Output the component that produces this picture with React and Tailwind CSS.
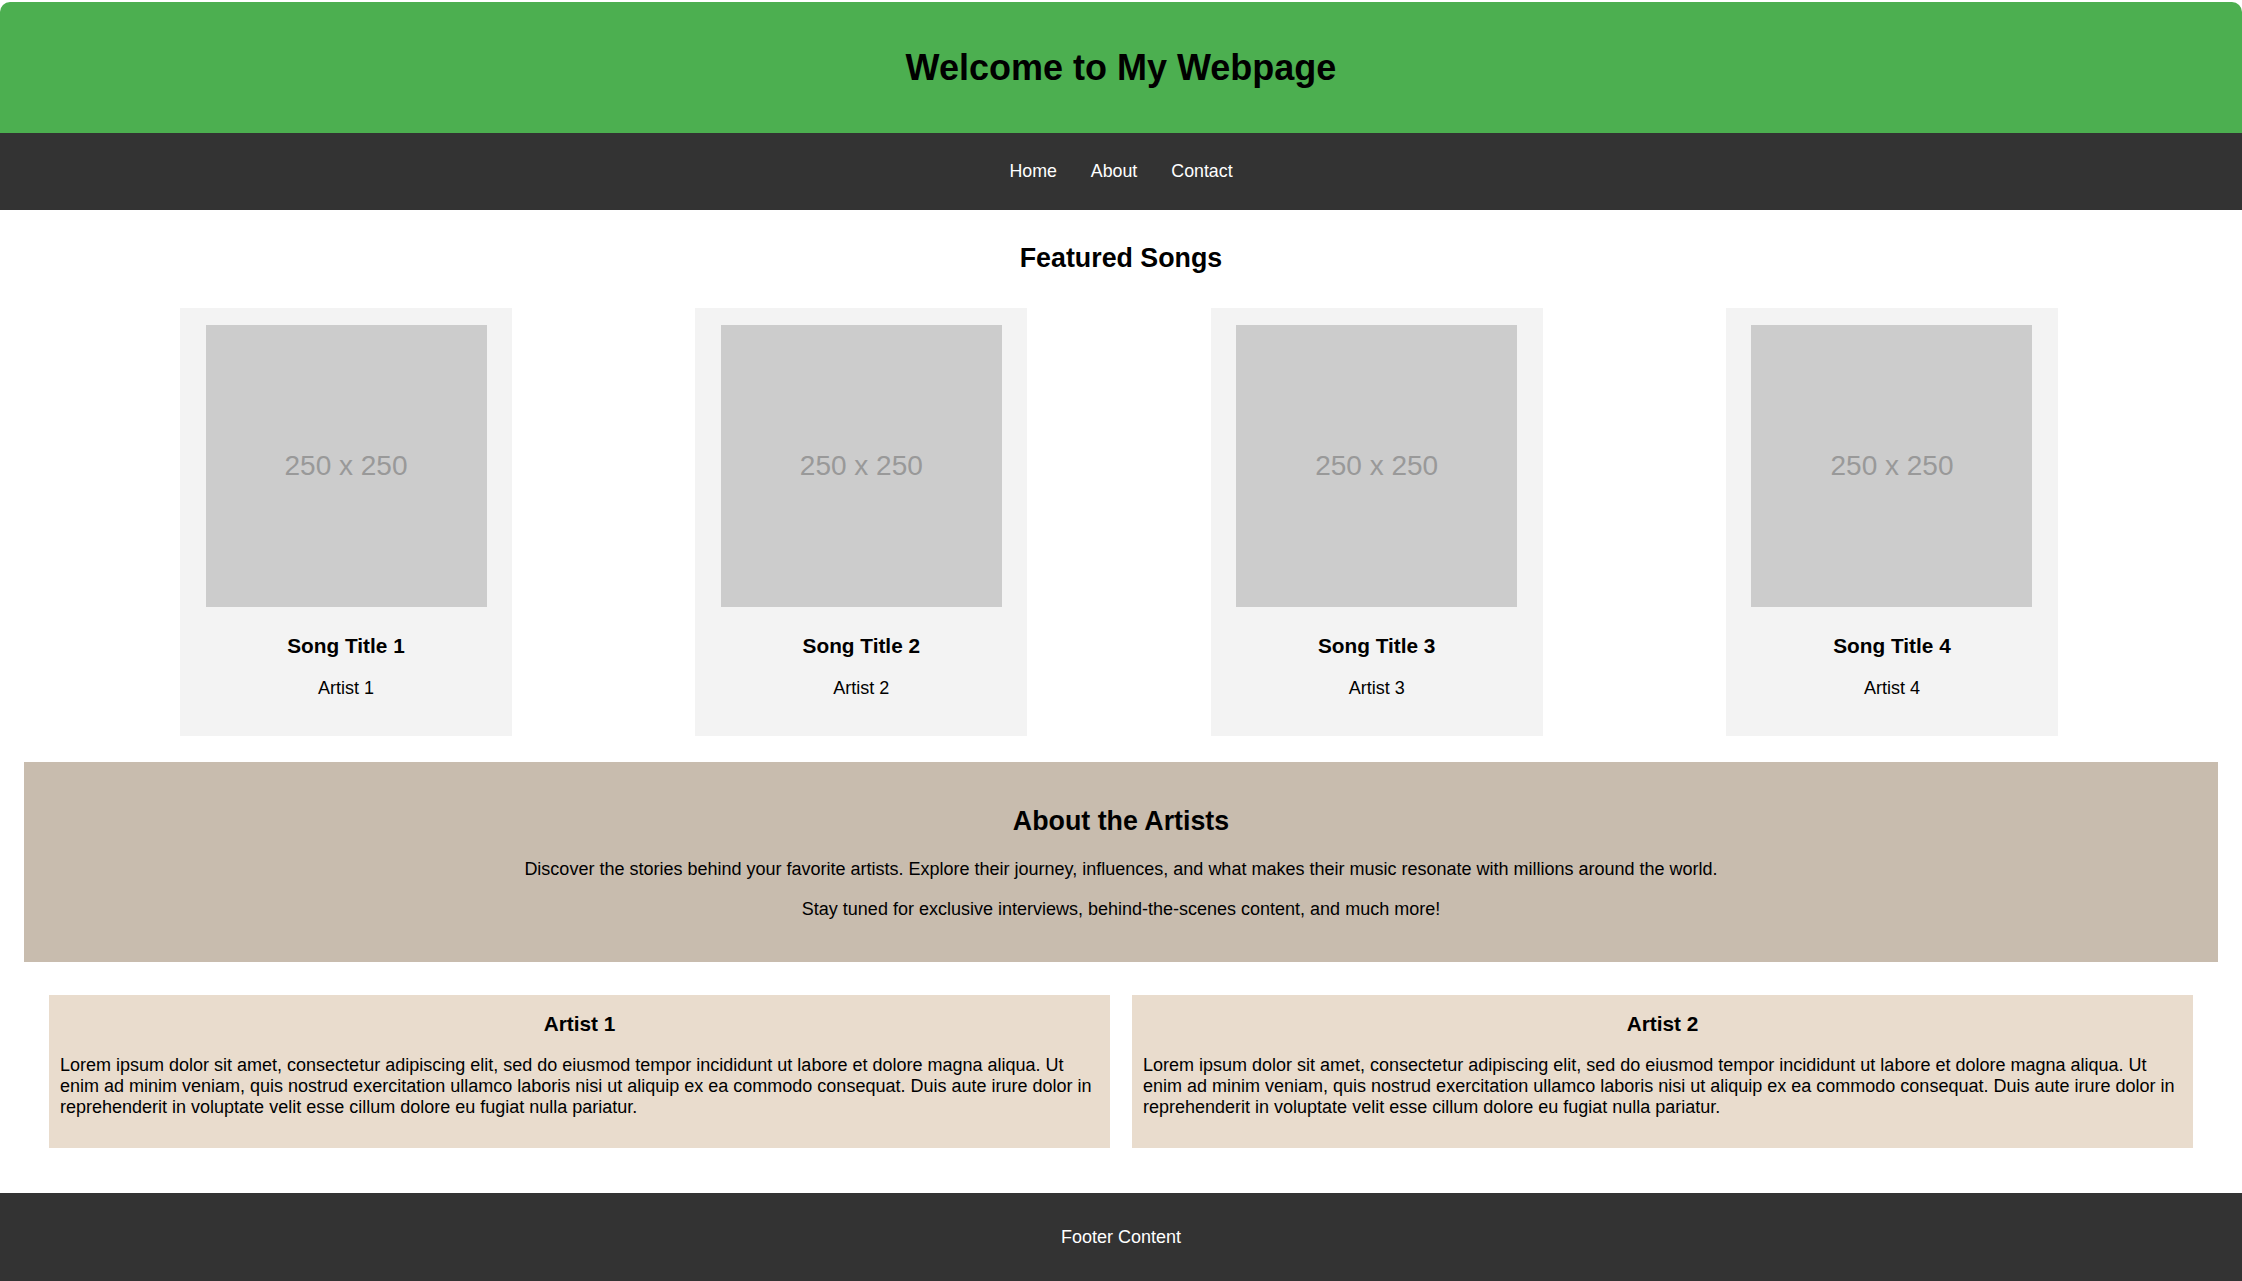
export default function App() {
  const songs = [1, 2, 3, 4];
  const lorem =
    "Lorem ipsum dolor sit amet, consectetur adipiscing elit, sed do eiusmod tempor incididunt ut labore et dolore magna aliqua. Ut enim ad minim veniam, quis nostrud exercitation ullamco laboris nisi ut aliquip ex ea commodo consequat. Duis aute irure dolor in reprehenderit in voluptate velit esse cillum dolore eu fugiat nulla pariatur.";
  return (
    <div
      className="bg-white pt-[2px] text-black text-[18px] leading-[normal]"
      style={{ fontFamily: '"Liberation Sans", Arial, sans-serif' }}
    >
      <header className="h-[131px] bg-[#4caf50] rounded-t-[10px] flex items-center justify-center">
        <h1 className="text-[36px] font-bold leading-[normal]">Welcome to My Webpage</h1>
      </header>
      <nav className="h-[77px] bg-[#333333] flex items-center justify-center gap-[34px]">
        <a className="text-white text-[17.8px]" href="#">Home</a>
        <a className="text-white text-[17.8px]" href="#">About</a>
        <a className="text-white text-[17.8px]" href="#">Contact</a>
      </nav>
      <section>
        <h2 className="text-center text-[26.8px] font-bold leading-[normal] mt-[33px] mb-[34px]">Featured Songs</h2>
        <div className="flex justify-between pl-[180px] pr-[184px]">
          {songs.map((n) => (
            <div key={n} className="w-[332px] bg-[#f3f3f3] pt-[17px] pb-[37px] text-center">
              <div className="w-[281px] h-[282px] mx-auto bg-[#cccccc] flex items-center justify-center text-[28px] text-[#999999]">
                250 x 250
              </div>
              <h3 className="mt-[27px] text-[20.8px] font-bold leading-[normal]">Song Title {n}</h3>
              <p className="mt-[20px] text-[18px] leading-[normal]">Artist {n}</p>
            </div>
          ))}
        </div>
      </section>
      <section className="mx-[24px] mt-[26px] bg-[#c8bcae] pt-[44px] pb-[42px] text-center">
        <h2 className="text-[26.8px] font-bold leading-[normal] mb-[22px]">About the Artists</h2>
        <p className="mb-[19px]">
          Discover the stories behind your favorite artists. Explore their journey, influences, and what makes their music resonate with millions around the world.
        </p>
        <p>Stay tuned for exclusive interviews, behind-the-scenes content, and much more!</p>
      </section>
      <section className="px-[49px] mt-[33px] flex gap-[22px]">
        {[1, 2].map((n) => (
          <div key={n} className="flex-1 bg-[#e9dccd] px-[11px] pt-[17px] pb-[30px]">
            <h3 className="text-center text-[20.8px] font-bold leading-[normal]">Artist {n}</h3>
            <p className="mt-[19px] leading-[normal]">{lorem}</p>
          </div>
        ))}
      </section>
      <footer className="mt-[45px] h-[88px] bg-[#333333] flex items-center justify-center text-white">
        Footer Content
      </footer>
    </div>
  );
}
